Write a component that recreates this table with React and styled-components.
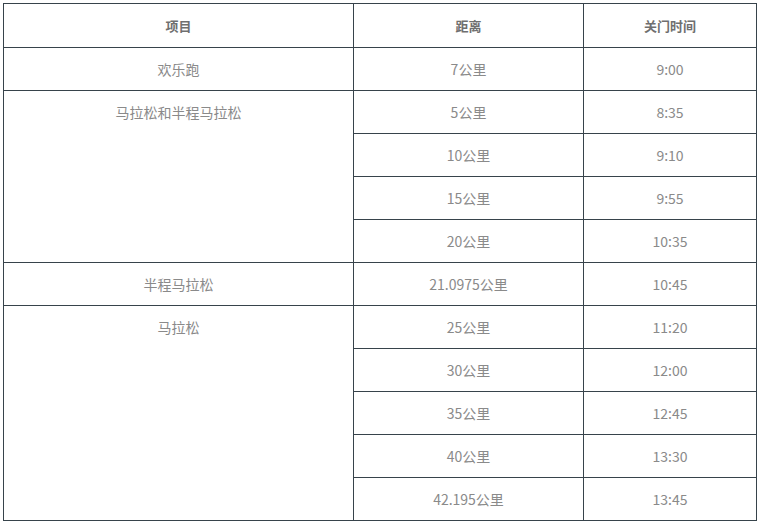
import React from "react";
import styled, { createGlobalStyle } from "styled-components";

const Global = createGlobalStyle`
  html, body { margin: 0; padding: 0; background: #fff; }
  body { padding: 3px 0 0 3px; }
`;

const Table = styled.table`
  border-collapse: collapse;
  table-layout: fixed;
  width: 753px;
  font-family: "Noto Sans CJK SC", "Noto Sans", sans-serif;
  font-size: 14px;
  color: #8a8a8a;
`;

const Col = styled.col`
  width: ${(p) => p.$w}px;
`;

const Th = styled.th`
  height: 43px;
  padding: 0;
  border: 1px solid #37434b;
  font-weight: 700;
  color: #6f6f6f;
  font-size: 13px;
  text-align: center;
  vertical-align: middle;
`;

const Td = styled.td`
  height: 42px;
  padding: 0;
  border: 1px solid #37434b;
  text-align: center;
  vertical-align: ${(p) => (p.$top ? "top" : "middle")};
  line-height: ${(p) => (p.$top ? "42px" : "normal")};
`;

const groups = [
  { name: "欢乐跑", rows: [["7公里", "9:00"]] },
  {
    name: "马拉松和半程马拉松",
    rows: [
      ["5公里", "8:35"],
      ["10公里", "9:10"],
      ["15公里", "9:55"],
      ["20公里", "10:35"],
    ],
  },
  { name: "半程马拉松", rows: [["21.0975公里", "10:45"]] },
  {
    name: "马拉松",
    rows: [
      ["25公里", "11:20"],
      ["30公里", "12:00"],
      ["35公里", "12:45"],
      ["40公里", "13:30"],
      ["42.195公里", "13:45"],
    ],
  },
];

export default function App() {
  return (
    <>
      <Global />
      <Table>
        <colgroup>
          <Col $w={350} />
          <Col $w={230} />
          <Col $w={173} />
        </colgroup>
        <thead>
          <tr>
            <Th>项目</Th>
            <Th>距离</Th>
            <Th>关门时间</Th>
          </tr>
        </thead>
        <tbody>
          {groups.map((g) =>
            g.rows.map((r, i) => (
              <tr key={g.name + i}>
                {i === 0 && (
                  <Td rowSpan={g.rows.length} $top>
                    {g.name}
                  </Td>
                )}
                <Td>{r[0]}</Td>
                <Td>{r[1]}</Td>
              </tr>
            ))
          )}
        </tbody>
      </Table>
    </>
  );
}
